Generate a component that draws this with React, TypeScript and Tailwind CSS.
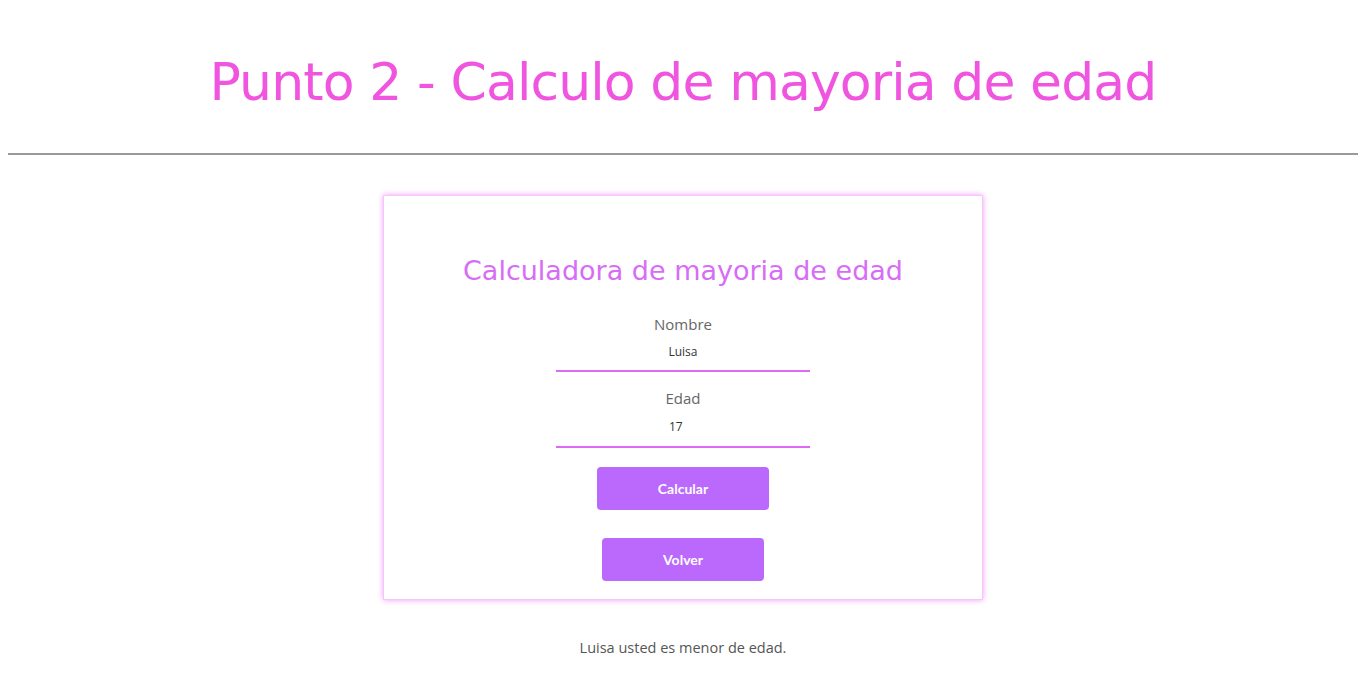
export default function App() {
  return (
    <div className="min-h-screen bg-white px-2 font-['DejaVu_Sans',sans-serif]">
      <h1 className="pt-[44px] text-center text-[52px] leading-[76px] tracking-[-0.9px] text-[#f055e0]">
        Punto 2 - Calculo de mayoria de edad
      </h1>
      <hr className="mt-[33px] border-t-2 border-t-[#9a9a9a] border-b-0" />

      <div className="mx-auto mt-[40px] flex w-[600px] flex-col items-center border border-[#f5c6fb] bg-white pb-[18px] pt-[56px] shadow-[0_0_6px_#f29cfb]">
        <h2 className="text-[27px] leading-[38px] tracking-[0px] text-[#d86cf6]">
          Calculadora de mayoria de edad
        </h2>

        <div className="mt-[23px] flex w-[254px] flex-col items-center">
          <label className="font-['Open_Sans',sans-serif] text-[15px] leading-[22px] text-[#666]">Nombre</label>
          <div className="mt-[9px] w-full border-b-2 border-[#dc6af7] pb-[10px] text-center font-['Open_Sans',sans-serif] text-[12px] leading-[16px] text-[#333]">
            Luisa
          </div>
        </div>

        <div className="mt-[15px] flex w-[254px] flex-col items-center">
          <label className="font-['Open_Sans',sans-serif] text-[15px] leading-[22px] text-[#666]">Edad</label>
          <div className="mt-[10px] w-full border-b-2 border-[#dc6af7] pb-[11px] pl-[113px] font-['Open_Sans',sans-serif] text-[12px] leading-[16px] text-[#333]">
            17
          </div>
        </div>

        <button className="mt-[19px] h-[43px] w-[172px] rounded-[4px] bg-[#bb69fd] font-['Lato',sans-serif] text-[14px] font-bold text-white">
          Calcular
        </button>
        <button className="mt-[28px] h-[43px] w-[162px] rounded-[4px] bg-[#bb69fd] font-['Lato',sans-serif] text-[14px] font-bold text-white">
          Volver
        </button>
      </div>

      <p className="mt-[38px] text-center font-['Open_Sans',sans-serif] text-[14.5px] leading-[20px] text-[#555]">
        Luisa usted es menor de edad.
      </p>
    </div>
  );
}
